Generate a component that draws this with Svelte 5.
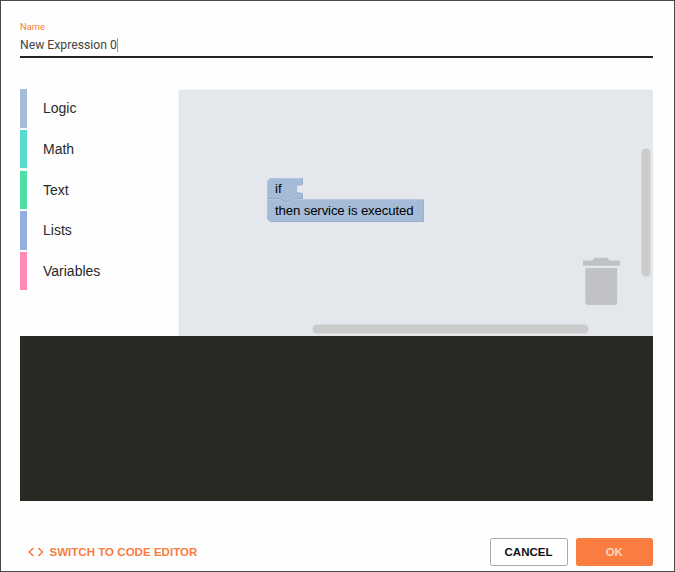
<script>
  const categories = [
    { name: 'Logic', color: '#a5bbd8' },
    { name: 'Math', color: '#57dbce' },
    { name: 'Text', color: '#4edfa5' },
    { name: 'Lists', color: '#93afe0' },
    { name: 'Variables', color: '#ff8ab8' }
  ];
  let name = $state('New Expression 0');
</script>

<main class="dialog">
  <header class="field">
    <div class="label">Name</div>
    <div class="value"><span>{name}</span><i class="caret"></i></div>
  </header>

  <section class="editor">
    <nav class="toolbox">
      {#each categories as category}
        <div class="category">
          <span class="swatch" style="background: {category.color}"></span>
          <span class="category-name">{category.name}</span>
        </div>
      {/each}
    </nav>
    <svg class="workspace" width="475" height="247" viewBox="178 89 475 247">
      <rect x="178.500" y="89.600" width="475" height="247" fill="#e4e8ed" />
      <g>
        <path d="M272.500 178H303V184C301.500 187 296 182 296 189C296 196 301.500 191 303 194V199.500H424V222H273Q267 222 267 216V183.500Q267 178 272.500 178Z" fill="#a5bbd8" />
        <path d="M302.500 178.500V184C301 187 296.300 182 296.300 189C296.300 196 301 191 302.500 194V199M423.500 200V221.500H273Q268.500 221.500 267.500 217" fill="none" stroke="#9ab0cd" />
        <path d="M267.500 215V184Q267.500 178.500 272.500 178.500H302M303 199.900H423" fill="none" stroke="#b0c4dd" />
        <path d="M267.500 198.500H280L285 202H288.500L293 198.500H302" fill="none" stroke="#92a9c7" stroke-width=".8" />
        <path d="M267.500 199.700H280L284.500 203.100H289L293.500 199.700H303" fill="none" stroke="#bdcfe4" stroke-width=".8" />
      </g>
      <g class="block-text">
        <text x="275" y="193.300">if</text>
        <text x="275" y="215" textLength="138.500">then service is executed</text>
      </g>
      <path d="M583 260.500H592.500L594.500 257.700H607.500L609.500 260.500H620V265.700H583ZM585.300 268H617.200V301.500Q617.200 305 613.700 305H588.800Q585.300 305 585.300 301.500Z" fill="#c1c2c6" />
      <rect x="641.500" y="148.500" width="9" height="128.300" rx="4.500" fill="#cbcbcc" />
      <rect x="312.500" y="324.500" width="276" height="9" rx="4.500" fill="#cbcbcc" />
    </svg>
  </section>

  <section class="preview"></section>

  <footer class="actions">
    <button class="switch">
      <svg width="16" height="12" viewBox="0 0 16 12"><path d="M5.300 2L1.300 6L5.300 10M10.400 2L14.400 6L10.400 10" fill="none" stroke="#f97c41" stroke-width="1.600" /></svg>
      <span>SWITCH TO CODE EDITOR</span>
    </button>
    <span class="spacer"></span>
    <button class="cancel">CANCEL</button>
    <button class="ok">OK</button>
  </footer>
</main>

<style>
  .dialog {
    box-sizing: border-box;
    width: 675px;
    height: 572px;
    padding: 20px 21px 0 19px;
    border: 1px solid #48484a;
    background: #fefefe;
    display: flex;
    flex-direction: column;
    font-family: "Liberation Sans", Arial, sans-serif;
    color: #333;
  }
  .field {
    height: 37px;
    box-sizing: border-box;
    border-bottom: 2px solid #242426;
    font-family: Roboto, sans-serif;
    flex: none;
  }
  .label { font-size: 9.4px; line-height: 12px; color: #f97c41; }
  .value {
    display: flex;
    align-items: center;
    height: 23px;
    font-size: 12.2px;
    color: #444;
  }
  .caret { width: 1px; height: 14px; background: #f97c41; }
  .editor { display: flex; height: 247px; margin-top: 31px; flex: none; }
  .toolbox { width: 158px; padding-top: 1.2px; box-sizing: border-box; }
  .category { height: 40.7px; display: flex; }
  .swatch { width: 7px; height: 38.4px; margin-top: -0.9px; }
  .category-name { margin-left: 16px; font-size: 14px; line-height: 37px; color: #292929; }
  .workspace { display: block; }
  .block-text { font: 13.2px "Liberation Sans", Arial, sans-serif; fill: #000; }
  .preview { height: 165px; background: #282923; flex: none; }
  .actions { display: flex; margin-top: 37px; height: 28px; }
  button {
    font: bold 11.5px "Liberation Sans", Arial, sans-serif;
    padding: 0;
    border: 0;
    box-sizing: border-box;
    border-radius: 2.5px;
  }
  .switch { display: flex; align-items: center; gap: 5.5px; padding-left: 8px; background: none; color: #f97c41; white-space: nowrap; }
  .switch span { letter-spacing: 0.03px; }
  .spacer { flex: 1; }
  .cancel { width: 78px; border: 1px solid #aaa; background: #fff; color: #111; }
  .ok { width: 77.5px; margin-left: 8px; background: #f97c41; color: #fdd5c2; }
</style>
